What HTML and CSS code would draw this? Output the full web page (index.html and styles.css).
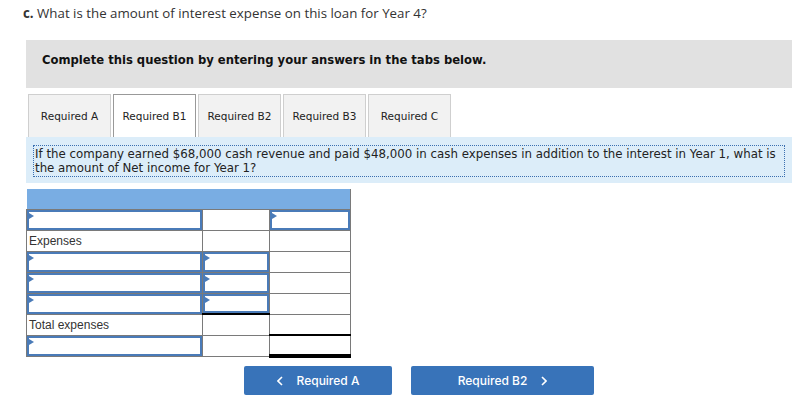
FILE: index.html
```html
<!DOCTYPE html>
<html>
<head>
<meta charset="utf-8">
<link rel="stylesheet" href="styles.css">
</head>
<body>
<div class="page">
  <p class="question"><b>c.</b> What is the amount of interest expense on this loan for Year 4?</p>
  <div class="banner">Complete this question by entering your answers in the tabs below.</div>
  <div class="tabs">
    <div class="tab">Required A</div>
    <div class="tab active">Required B1</div>
    <div class="tab">Required B2</div>
    <div class="tab">Required B3</div>
    <div class="tab">Required C</div>
  </div>
  <div class="prompt">
    <div class="prompt-inner">If the company earned $68,000 cash revenue and paid $48,000 in cash expenses in addition to the interest in Year 1, what is the amount of Net income for Year 1?</div>
  </div>
  <table class="grid">
    <tr class="head"><td colspan="3"></td></tr>
    <tr><td class="c1 inp"><span class="flag"></span></td><td class="c2"></td><td class="c3 inp"><span class="flag"></span></td></tr>
    <tr><td class="c1 label">Expenses</td><td class="c2"></td><td class="c3"></td></tr>
    <tr><td class="c1 inp"><span class="flag"></span></td><td class="c2 inp"><span class="flag"></span></td><td class="c3"></td></tr>
    <tr><td class="c1 inp"><span class="flag"></span></td><td class="c2 inp"><span class="flag"></span></td><td class="c3"></td></tr>
    <tr><td class="c1 inp"><span class="flag"></span></td><td class="c2 inp sum"><span class="flag"></span></td><td class="c3"></td></tr>
    <tr><td class="c1 label">Total expenses</td><td class="c2"></td><td class="c3 sum"></td></tr>
    <tr><td class="c1 inp"><span class="flag"></span></td><td class="c2"></td><td class="c3 total"></td></tr>
  </table>
  <div class="nav">
    <button class="btn prev"><svg class="chev" width="6" height="10" viewBox="0 0 6 10"><polyline points="5,1 1,5 5,9" fill="none" stroke="#fff" stroke-width="1.6"/></svg>Required A</button>
    <button class="btn next">Required B2<svg class="chev" width="6" height="10" viewBox="0 0 6 10"><polyline points="1,1 5,5 1,9" fill="none" stroke="#fff" stroke-width="1.6"/></svg></button>
  </div>
</div>
</body>
</html>
```
FILE: styles.css
```css
html, body { margin: 0; padding: 0; background: #fff; }
.page { padding: 0 18px 0 26px; width: 766px; }
.question {
  margin: 0; padding: 5px 0 0 0; margin-left: -3px;
  font-family: "Open Sans", "Liberation Sans", sans-serif;
  font-size: 13.3px; color: #333; line-height: 16px; height: 35px;
}
.question b { font-weight: 700; }
.banner {
  background: #e1e1e1; height: 48px; box-sizing: border-box;
  padding: 12px 16px 0 16px; line-height: 16px;
  font-family: "DejaVu Sans", Verdana, sans-serif;
  font-size: 11.6px; font-weight: 700; color: #111;
}
.tabs { display: flex; gap: 2px; margin-top: 6px; padding-left: 2px; height: 43px; }
.tab {
  box-sizing: border-box; height: 43px; width: 83px;
  border: 1px solid #cfcfcf; border-bottom: none; background: #f2f2f2;
  display: flex; align-items: center; justify-content: center;
  font-family: "DejaVu Sans", Verdana, sans-serif; font-size: 10.5px; color: #222;
}
.tab.active { background: #fff; border-color: #999; }
.prompt { background: #dcedf9; padding: 8px 7px 6px 7px; height: 46px; box-sizing: border-box; }
.prompt-inner {
  border: 1px dotted #3a6fb0; padding: 1px 1px;
  font-family: "DejaVu Sans", Verdana, sans-serif; font-size: 11.8px; line-height: 14px; color: #222;
}
.grid { border-collapse: collapse; margin-top: 6px; table-layout: fixed; }
.grid td { border: 1px solid #7a7a7a; height: 21px; padding: 0; box-sizing: border-box; position: relative; }
.grid .head td { background: #79ade3; border: none; border-right: 1px solid #7a7a7a; height: 20px; }
.c1 { width: 176px; }
.c2 { width: 67px; }
.c3 { width: 81px; }
.inp { box-shadow: inset 0 0 0 2px #4a7bb8; }
.flag {
  position: absolute; left: 2px; top: 3px; width: 0; height: 0;
  border-top: 3px solid transparent; border-bottom: 3px solid transparent; border-left: 5px solid #4a7bb8;
}
.label { font-family: "Liberation Sans", Arial, sans-serif; font-size: 12px; color: #333; padding-left: 2px !important; }
.grid td.sum { border-bottom: 2px solid #000; }
.grid td.total { border-bottom: 4px solid #000; }
.nav { display: flex; justify-content: center; gap: 19px; margin-top: 8px; padding-left: 20px; }
.btn {
  height: 29px; border: none; border-radius: 2px; background: #3873b9; color: #fff;
  font-family: Inter, "Liberation Sans", sans-serif; font-size: 12px; font-weight: 500;
  display: flex; align-items: center; justify-content: center; gap: 14px;
}
.btn.prev { width: 148px; }
.btn.next { width: 183px; }
```
